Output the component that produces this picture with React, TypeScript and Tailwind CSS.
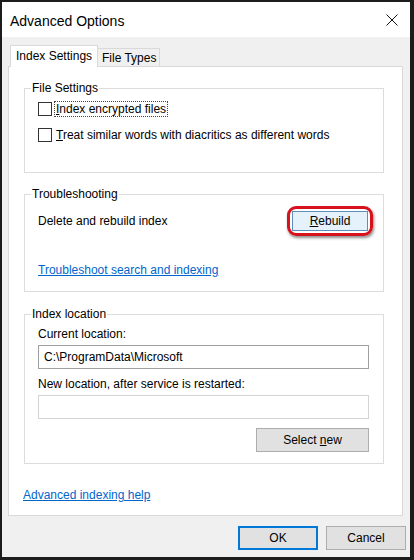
import React from "react";

const font = "font-['Liberation_Sans',Arial,sans-serif]";

function Group({
  label,
  height,
  className = "",
  children,
}: {
  label: string;
  height: string;
  className?: string;
  children: React.ReactNode;
}) {
  return (
    <div className={`relative border border-[#dcdcdc] ml-[15px] mr-[18px] ${height} ${className}`}>
      <div className="absolute -top-[9px] left-[6px] px-[1px] bg-white leading-[16px] text-[12px] text-black">
        {label}
      </div>
      {children}
    </div>
  );
}

function Checkbox({ children, focused = false }: { children: React.ReactNode; focused?: boolean }) {
  return (
    <div className="flex items-center h-[16px]">
      <div className="w-[14px] h-[14px] border border-[#333333] bg-white" />
      <div
        className={`ml-[2px] px-[1px] leading-[14px] border ${
          focused ? "border-dotted border-[#444444]" : "border-transparent"
        }`}
      >
        {children}
      </div>
    </div>
  );
}

export default function App() {
  return (
    <div className={`w-[414px] h-[560px] bg-[#1c1c1c] pt-[2px] pl-[2px] pr-[4px] pb-[3px] ${font} text-[12px] text-black`}>
      <div className="flex flex-col h-full bg-[#f0f0f0]">
        {/* Title bar */}
        <div className="h-[35px] bg-white flex items-center justify-between pl-[8px] pr-[12px] pt-[3px]">
          <span className="text-[14px] leading-[18px] text-black">Advanced Options</span>
          <svg width="12" height="12" viewBox="0 0 12 12" className="-mt-[2px]">
            <path d="M0.5 0.5 L11.5 11.5 M11.5 0.5 L0.5 11.5" stroke="#111" strokeWidth="1" fill="none" />
          </svg>
        </div>

        {/* Body */}
        <div className="pl-[6px] pr-[7px] pt-[8px]">
          {/* Tabs */}
          <div className="flex items-end h-[21px] pl-[2px]">
            <div className="relative z-10 -mb-px h-[22px] w-[88px] bg-white border border-b-0 border-[#d9d9d9] flex items-center pl-[5px] pb-[1px]">
              Index Settings
            </div>
            <div className="h-[18px] w-[62px] border-t border-r border-[#d9d9d9] bg-[#f0f0f0] flex items-center pl-[4px]">
              File Types
            </div>
          </div>

          {/* Panel */}
          <div className="h-[450px] bg-white border border-[#d9d9d9] pt-[21px]">
            <Group label="File Settings" height="h-[85px]">
              <div className="pl-[13px] pt-[12px] flex flex-col gap-[10px]">
                <Checkbox focused>
                  <span className="underline">I</span>ndex encrypted files
                </Checkbox>
                <Checkbox>
                  <span className="underline">T</span>reat similar words with diacritics as different words
                </Checkbox>
              </div>
            </Group>

            <Group label="Troubleshooting" height="h-[98px]" className="mt-[21px]">
              <div className="pl-[13px] pr-[10px] pt-[11px] flex items-center justify-between">
                <span className="leading-[16px]">Delete and rebuild index</span>
                <div className="rounded-[9px] border-[3px] border-[#d8121c] p-[2px] shadow-[1px_2px_3px_rgba(0,0,0,0.45)]">
                  <div className="w-[76px] h-[20px] bg-[#e5f1fb] border border-[#5d8fb8] flex items-center justify-center leading-[14px]">
                    <span>
                      <span className="underline">R</span>ebuild
                    </span>
                  </div>
                </div>
              </div>
              <div className="pl-[13px] mt-[26px] leading-[16px] text-[#0066cc] underline">
                Troubleshoot search and indexing
              </div>
            </Group>

            <Group label="Index location" height="h-[150px]" className="mt-[22px]">
              <div className="pl-[13px] pr-[14px] pt-[11px] flex flex-col">
                <div className="leading-[16px]">Current location:</div>
                <div className="mt-[3px] h-[24px] border border-[#a0a0a0] bg-white flex items-center pl-[5px]">
                  C:\ProgramData\Microsoft
                </div>
                <div className="mt-[7px] leading-[16px]">New location, after service is restarted:</div>
                <div className="mt-[3px] h-[24px] border border-[#d4d4d4] bg-white" />
                <div className="mt-[9px] flex justify-end">
                  <div className="w-[113px] h-[24px] bg-[#e1e1e1] border border-[#adadad] flex items-center justify-center">
                    <span>
                      Select <span className="underline">n</span>ew
                    </span>
                  </div>
                </div>
              </div>
            </Group>

            <div className="ml-[14px] mt-[23px] leading-[16px] text-[#0066cc] underline">Advanced indexing help</div>
          </div>
        </div>

        {/* Bottom buttons */}
        <div className="flex justify-end gap-[8px] pr-[4px] pt-[10px]">
          <div className="w-[80px] h-[24px] bg-[#e1e1e1] border-2 border-[#0078d7] flex items-center justify-center">
            OK
          </div>
          <div className="w-[80px] h-[24px] bg-[#e1e1e1] border border-[#adadad] flex items-center justify-center">
            Cancel
          </div>
        </div>
      </div>
    </div>
  );
}
